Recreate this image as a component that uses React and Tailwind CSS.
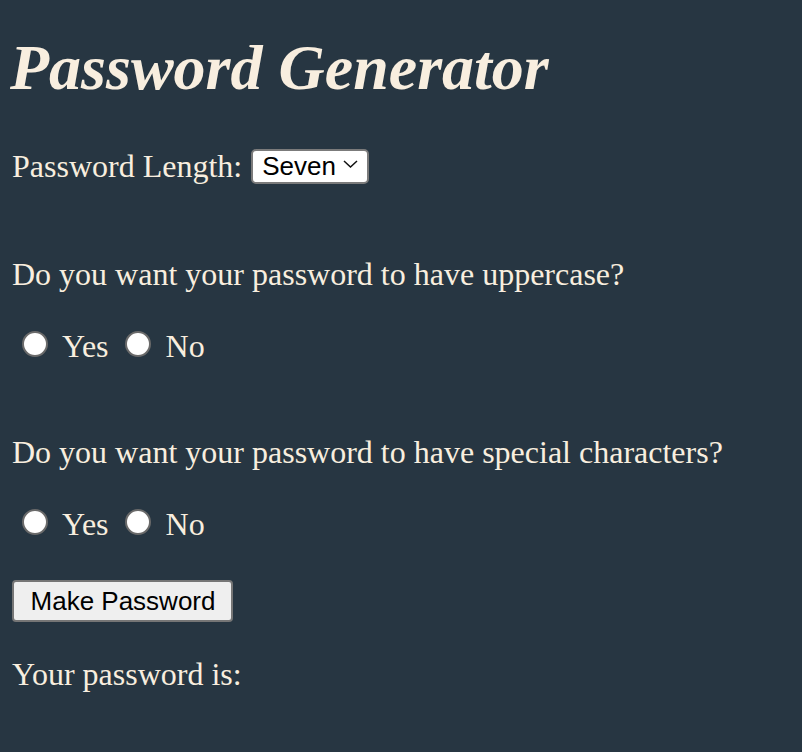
import { useState } from "react";

function Radio({ name, value, checked, onChange, className }) {
  return (
    <input
      type="radio"
      name={name}
      value={value}
      checked={checked}
      onChange={onChange}
      className={
        "appearance-none w-[26px] h-[26px] shrink-0 rounded-full border-2 border-[#6a6a6a] bg-white checked:border-[7px] checked:border-[#1a73e8] " +
        (className || "")
      }
    />
  );
}

function YesNo({ name, value, setValue, className }) {
  return (
    <div className={"flex items-start " + (className || "")}>
      <Radio
        name={name}
        value="yes"
        checked={value === "yes"}
        onChange={() => setValue("yes")}
        className="ml-[10px] mt-[3px]"
      />
      <span className="ml-[14px]">Yes</span>
      <Radio
        name={name}
        value="no"
        checked={value === "no"}
        onChange={() => setValue("no")}
        className="ml-[16px] mt-[3px]"
      />
      <span className="ml-[15px]">No</span>
    </div>
  );
}

export default function App() {
  const [length, setLength] = useState("7");
  const [upper, setUpper] = useState("");
  const [special, setSpecial] = useState("");
  const [password, setPassword] = useState("");

  const makePassword = () => {
    let chars = "abcdefghijklmnopqrstuvwxyz0123456789";
    if (upper === "yes") chars += "ABCDEFGHIJKLMNOPQRSTUVWXYZ";
    if (special === "yes") chars += "!@#$%^&*()-_=+?";
    let out = "";
    for (let i = 0; i < Number(length); i++) {
      out += chars[Math.floor(Math.random() * chars.length)];
    }
    setPassword(out);
  };

  return (
    <div className="min-h-screen bg-[#273642] px-[12px] pt-[32px] pb-10 text-[#f8eedf] font-['Liberation_Serif','Times_New_Roman',serif] text-[32px] leading-[36px]">
      <h1 className="text-[64px] leading-[72px] font-bold italic -ml-[2px]">
        Password Generator
      </h1>

      {/* Length */}
      <div className="flex items-start mt-[40px]">
        <label htmlFor="len" className="mt-[4px]">
          Password Length:
        </label>
        <div className="relative ml-[9px] mt-[2px]">
          <select
            id="len"
            value={length}
            onChange={(e) => setLength(e.target.value)}
            className="appearance-none w-[118px] h-[35px] pl-[9px] pr-[30px] bg-white text-black border-2 border-[#7b7b7b] rounded-[5px] font-['Liberation_Sans',Arial,sans-serif] text-[26px] leading-[30px] outline-none"
          >
            <option value="7">Seven</option>
            <option value="8">Eight</option>
            <option value="9">Nine</option>
            <option value="10">Ten</option>
            <option value="12">Twelve</option>
          </select>
          <svg
            className="pointer-events-none absolute right-[11px] top-[14px]"
            width="15"
            height="8"
            viewBox="0 0 15 8"
            fill="none"
          >
            <polyline points="1,1 7.5,7 14,1" stroke="#111" strokeWidth="1.5" />
          </svg>
        </div>
      </div>

      {/* Uppercase */}
      <p className="mt-[72px]">Do you want your password to have uppercase?</p>
      <YesNo name="upper" value={upper} setValue={setUpper} className="mt-[36px]" />

      {/* Special */}
      <p className="mt-[70px]">Do you want your password to have special characters?</p>
      <YesNo name="special" value={special} setValue={setSpecial} className="mt-[36px]" />

      <button
        onClick={makePassword}
        className="mt-[38px] w-[221px] h-[42px] pl-[1px] bg-[#efefef] text-black border-2 border-[#767676] rounded-[4px] font-['Liberation_Sans',Arial,sans-serif] text-[26px] leading-[30px]"
      >
        Make Password
      </button>

      <p className="mt-[34px]">
        Your password is: {password}
      </p>
    </div>
  );
}
